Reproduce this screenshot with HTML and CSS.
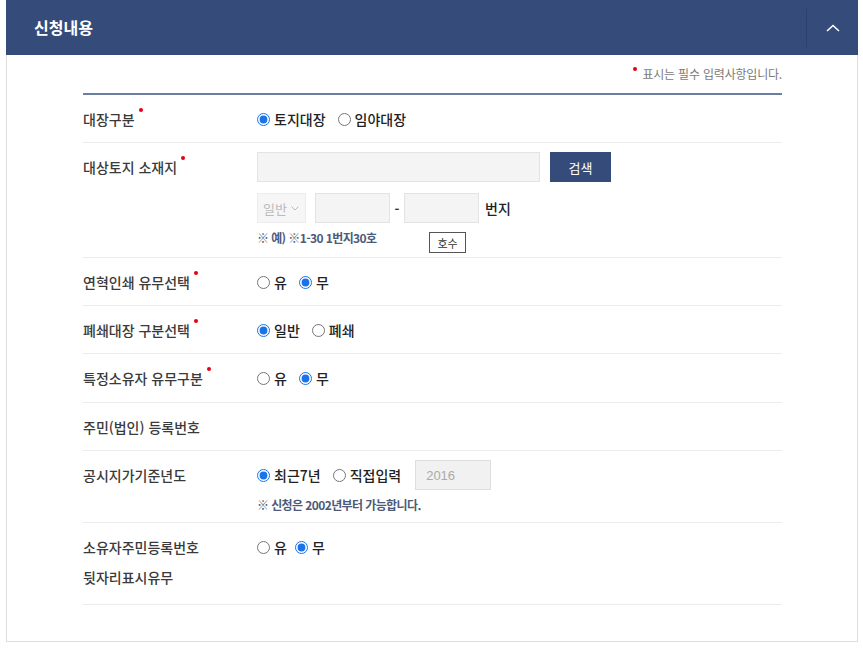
FILE: index.html
```html
<!DOCTYPE html>
<html lang="ko">
<head>
<meta charset="utf-8">
<link rel="stylesheet" href="styles.css">
</head>
<body>
<section class="panel">
  <header class="panel-head">
    <h2 class="panel-title">신청내용</h2>
    <button class="toggle" type="button" aria-label="접기">
      <svg width="14" height="8" viewBox="0 0 14 8"><polyline points="1,7 7,1.5 13,7" fill="none" stroke="#fff" stroke-width="1.6"/></svg>
    </button>
  </header>
  <div class="panel-body">
    <p class="req-note"><span class="dot"></span>표시는 필수 입력사항입니다.</p>
    <div class="form">
      <div class="row">
        <div class="label">대장구분<span class="dot"></span></div>
        <div class="value">
          <div class="line">
            <label class="opt"><input type="radio" name="a" checked>토지대장</label>
            <label class="opt"><input type="radio" name="a">임야대장</label>
          </div>
        </div>
      </div>
      <div class="row row-addr">
        <div class="label">대상토지 소재지<span class="dot"></span></div>
        <div class="value">
          <div class="line">
            <input class="field field-addr" type="text">
            <button class="btn-search" type="button">검색</button>
          </div>
          <div class="line line-gap">
            <span class="select">일반 <svg width="8" height="5" viewBox="0 0 8 5"><polyline points="0.5,0.5 4,4 7.5,0.5" fill="none" stroke="#bbb" stroke-width="1"/></svg></span>
            <input class="field field-num" type="text">
            <span class="dash">-</span>
            <input class="field field-num" type="text">
            <span class="unit">번지</span>
          </div>
          <div class="hint-line">
            <span class="hint">※ 예) ※1-30 1번지30호</span>
            <button class="btn-small" type="button">호수</button>
          </div>
        </div>
      </div>
      <div class="row">
        <div class="label">연혁인쇄 유무선택<span class="dot"></span></div>
        <div class="value">
          <div class="line">
            <label class="opt"><input type="radio" name="b">유</label>
            <label class="opt"><input type="radio" name="b" checked>무</label>
          </div>
        </div>
      </div>
      <div class="row">
        <div class="label">폐쇄대장 구분선택<span class="dot"></span></div>
        <div class="value">
          <div class="line">
            <label class="opt"><input type="radio" name="c" checked>일반</label>
            <label class="opt"><input type="radio" name="c">폐쇄</label>
          </div>
        </div>
      </div>
      <div class="row row-plus">
        <div class="label">특정소유자 유무구분<span class="dot"></span></div>
        <div class="value">
          <div class="line">
            <label class="opt"><input type="radio" name="d">유</label>
            <label class="opt"><input type="radio" name="d" checked>무</label>
          </div>
        </div>
      </div>
      <div class="row">
        <div class="label">주민(법인) 등록번호</div>
        <div class="value"></div>
      </div>
      <div class="row row-year">
        <div class="label">공시지가기준년도</div>
        <div class="value">
          <div class="line">
            <label class="opt"><input type="radio" name="e" checked>최근7년</label>
            <label class="opt opt-tight"><input type="radio" name="e">직접입력</label>
            <input class="field field-year" type="text" value="2016" disabled>
          </div>
          <p class="hint hint-year">※ 신청은 2002년부터 가능합니다.</p>
        </div>
      </div>
      <div class="row row-last">
        <div class="label">소유자주민등록번호<br>뒷자리표시유무</div>
        <div class="value">
          <div class="line">
            <label class="opt opt-tight"><input type="radio" name="f">유</label>
            <label class="opt"><input type="radio" name="f" checked>무</label>
          </div>
        </div>
      </div>
    </div>
  </div>
</section>
</body>
</html>
```

FILE: styles.css
```css
* { box-sizing: border-box; }
body {
  margin: 0;
  background: #fff;
  font-family: "Noto Sans CJK KR", "Noto Sans", sans-serif;
  color: #333;
}
.panel {
  margin-left: 6px;
  width: 852px;
  height: 642px;
  border: 1px solid #dcdcdc;
  border-top: 0;
}
.panel-head {
  height: 55px;
  background: #354c7a;
  display: flex;
  align-items: center;
  justify-content: space-between;
  margin: 0 -1px;
}
.panel-title {
  margin: -1px 0 0 28px;
  font-size: 16px;
  font-weight: 700;
  color: #fff;
  letter-spacing: 0;
}
.toggle {
  width: 52px;
  height: 38px;
  border: 0;
  border-left: 1px solid #2c4069;
  background: transparent;
  display: flex;
  align-items: center;
  justify-content: center;
  padding: 0;
}
.panel-body {
  padding: 0 75px 0 76px;
}
.req-note {
  margin: 0;
  padding-top: 11px;
  height: 38px;
  text-align: right;
  font-size: 12px;
  color: #7a7a7a;
  letter-spacing: -0.2px;
  line-height: 16px;
}
.req-note .dot { margin-right: 5px; vertical-align: 8px; }
.dot {
  display: inline-block;
  width: 4px;
  height: 4px;
  border-radius: 50%;
  background: #e60012;
  vertical-align: 13px;
  margin-left: 4px;
}
.form {
  border-top: 2px solid #6b7da1;
}
.row {
  display: grid;
  grid-template-columns: 174px 1fr;
  padding: 9px 0 8px;
  border-bottom: 1px solid #ececec;
}
.row-plus { padding-bottom: 9px; }
.label {
  font-size: 14px;
  line-height: 30px;
  color: #3a3a3a;
  font-weight: 500;
}
.value { min-height: 30px; }
.line {
  display: flex;
  align-items: center;
  height: 30px;
}
.opt {
  display: inline-flex;
  align-items: center;
  font-size: 14px;
  font-weight: 500;
  color: #222;
  margin-right: 12px;
}
.opt-tight { margin-right: 8px; }
.opt input {
  width: 13px;
  height: 13px;
  margin: 0 4px 0 0;
  accent-color: #1a73e8;
}
.field {
  height: 30px;
  border: 1px solid #e3e3e3;
  background: #f4f4f4;
  font-family: "Liberation Sans", Arial, sans-serif;
  font-size: 13px;
  padding: 0 10px;
}
.field-addr { width: 283px; }
.btn-search {
  width: 61px;
  height: 30px;
  margin-left: 10px;
  border: 0;
  background: #354c7a;
  color: #fff;
  font-family: "Noto Sans CJK KR", sans-serif;
  font-size: 13px;
}
.line-gap { margin-top: 11px; }
.select {
  display: inline-flex;
  align-items: center;
  gap: 4px;
  width: 49px;
  height: 30px;
  padding-left: 5px;
  background: #f6f6f6;
  border: 1px solid #ececec;
  font-size: 13px;
  color: #bbb;
  margin-right: 9px;
}
.field-num { width: 75px; }
.dash {
  width: 14px;
  text-align: center;
  font-size: 13px;
  font-weight: 700;
  color: #333;
}
.unit {
  margin-left: 6px;
  font-size: 14px;
  font-weight: 500;
  color: #222;
}
.hint-line {
  display: flex;
  align-items: flex-start;
  margin-top: 9px;
}
.hint {
  font-size: 12px;
  font-weight: 700;
  color: #4c5b79;
  letter-spacing: -0.6px;
  line-height: 16px;
}
.hint-line .hint { margin-top: -2px; width: 172px; }
.btn-small {
  width: 37px;
  height: 21px;
  border: 1px solid #555;
  background: #fff;
  font-family: "Noto Sans CJK KR", sans-serif;
  font-size: 11px;
  color: #333;
  padding: 0;
}
.row-addr { padding-bottom: 4px; }
.field-year {
  width: 76px;
  margin-left: 6px;
  color: #aaa;
  background: #f1f1f1;
  border-color: #dedede;
}
.hint-year { margin: 7px 0 0; }
.row-year { padding-bottom: 9px; }
.row-last { padding-bottom: 12px; }
```
